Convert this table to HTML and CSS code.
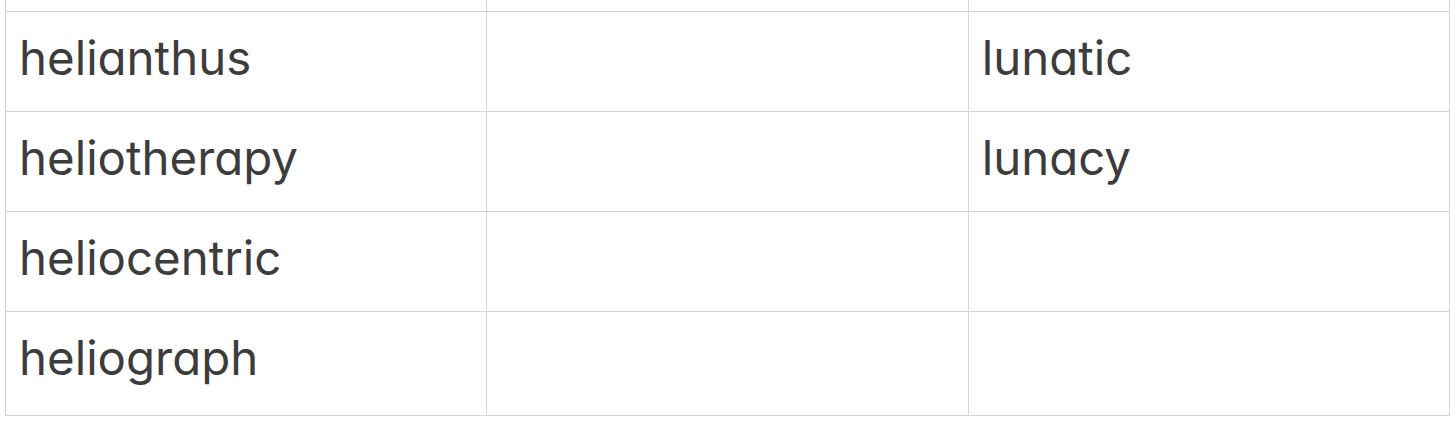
FILE: index.html
```html
<!DOCTYPE html>
<html lang="en">
<head>
<meta charset="utf-8">
<title>Word table</title>
<link rel="stylesheet" href="styles.css">
</head>
<body>
<div class="frame">
<table class="words">
  <tr class="row row-cut"><td></td><td></td><td></td></tr>
  <tr class="row"><td>helianthus</td><td></td><td>lunatic</td></tr>
  <tr class="row"><td>heliotherapy</td><td></td><td>lunacy</td></tr>
  <tr class="row"><td>heliocentric</td><td></td><td></td></tr>
  <tr class="row row-last"><td>heliograph</td><td></td><td></td></tr>
</table>
</div>
</body>
</html>
```

FILE: styles.css
```css
html, body {
  margin: 0;
  padding: 0;
  background: #ffffff;
}
.frame {
  height: 443px;
  overflow: hidden;
  padding: 0 6px 0 5px;
}
.words {
  width: 100%;
  border-collapse: collapse;
  table-layout: fixed;
  margin-top: -89px;
  font-family: Inter, "Noto Sans", sans-serif;
  font-feature-settings: "cv11" 1;
  font-size: 47.4px;
  color: #3c3c3c;
}
.words td {
  border: 1px solid #d4d4d4;
  height: 100px;
  padding: 0 0 8px 13px;
  box-sizing: border-box;
  vertical-align: middle;
  line-height: 1;
}
.row-last td {
  height: 104px;
  padding-bottom: 12px;
}
```
